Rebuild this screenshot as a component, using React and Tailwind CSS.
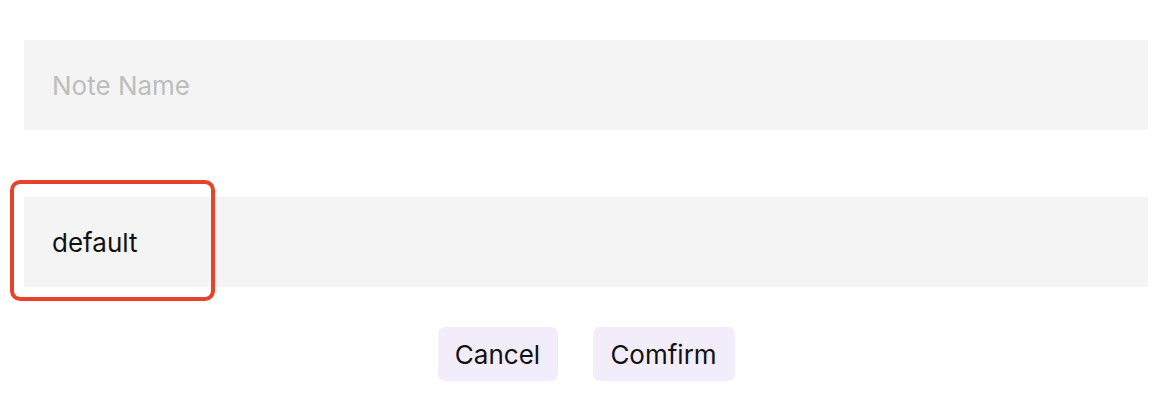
import React, { useState } from "react";

const App = () => {
  const [name, setName] = useState("");
  const [folder, setFolder] = useState("default");

  return (
    <div
      className="w-full bg-white px-[24px] pt-[40px] pb-[30px]"
      style={{ fontFamily: "Inter, 'Noto Sans', sans-serif" }}
    >
      <input
        type="text"
        placeholder="Note Name"
        value={name}
        onChange={(e) => setName(e.target.value)}
        className="block w-full h-[90px] bg-[#f4f4f4] px-[28px] text-[26px] text-[#111] placeholder-[#bdbdbd] outline-none"
      />

      <div className="relative mt-[67px]">
        <input
          type="text"
          value={folder}
          onChange={(e) => setFolder(e.target.value)}
          className="block w-full h-[90px] bg-[#f4f4f4] px-[28px] text-[26px] text-[#111] outline-none"
        />
        {/* highlight marker */}
        <div className="pointer-events-none absolute left-[-14px] top-[-17px] w-[205px] h-[121px] rounded-[10px] border-[4px] border-[#e8432a]" />
      </div>

      <div className="flex justify-center gap-[35px] mt-[40px]">
        <button className="h-[54px] w-[120px] rounded-[7px] bg-[#f3edfb] text-[26px] text-[#111]">
          Cancel
        </button>
        <button className="h-[54px] w-[142px] rounded-[7px] bg-[#f3edfb] text-[26px] text-[#111]">
          Comfirm
        </button>
      </div>
    </div>
  );
};

export default App;
